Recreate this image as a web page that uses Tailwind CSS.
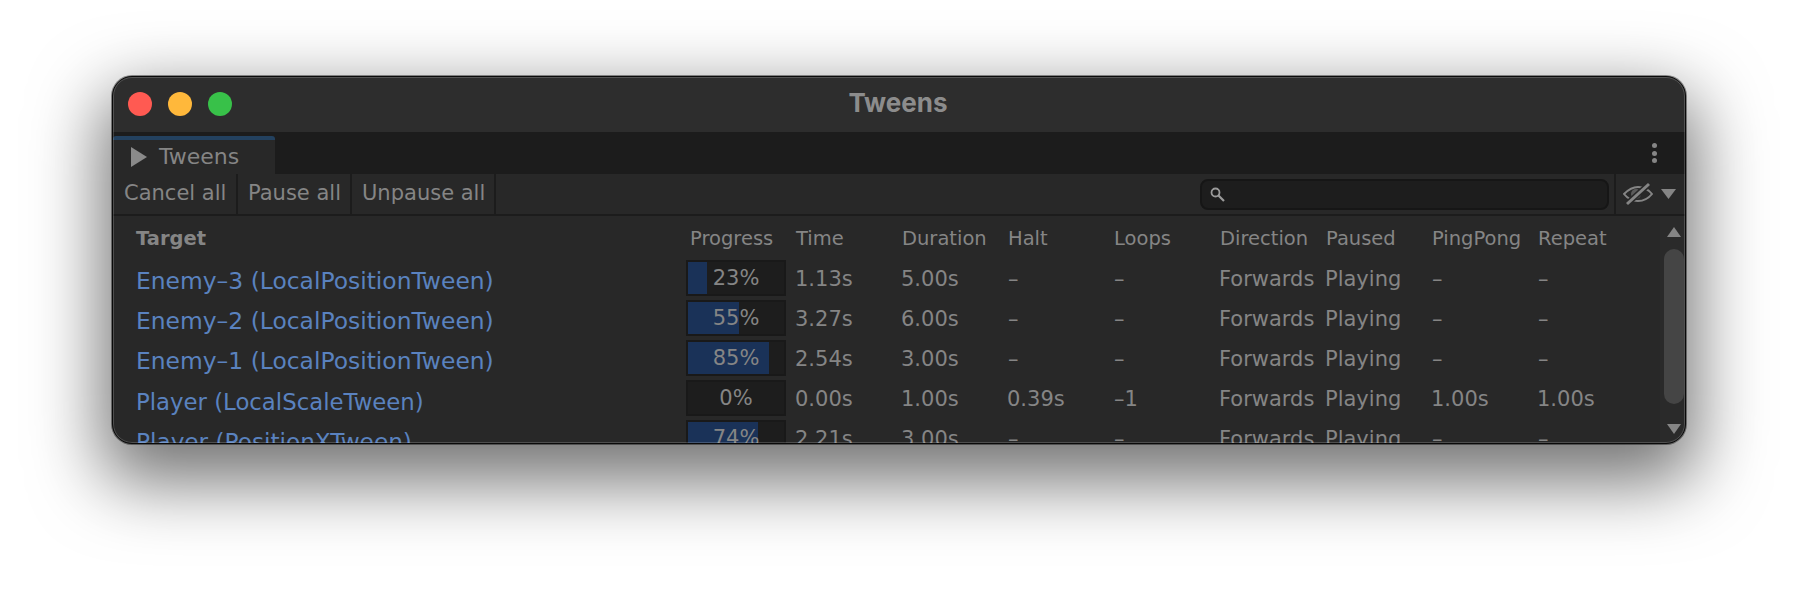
<!DOCTYPE html>
<html><head><meta charset="utf-8"><script src="https://cdn.jsdelivr.net/npm/@tailwindcss/browser@4"></script></head>
<body class="bg-white w-[1798px] h-[592px] overflow-hidden font-['DejaVu_Sans',sans-serif]">
<div class="pt-[76px] pl-[112px]">
<div class="relative w-[1574px] h-[368px] rounded-[20px] overflow-hidden flex flex-col bg-[#282828] border border-[#0a0a0a] ring-1 ring-[#00000066] shadow-[0_28px_70px_10px_rgba(0,0,0,0.55)] text-[#858585] text-[21px] leading-none">
  <div class="h-[55px] shrink-0 bg-[#2d2d2d] relative flex items-center pl-[15px] pb-[2px] gap-[16px]">
    <span class="w-6 h-6 rounded-full bg-[#ff5a52]"></span>
    <span class="w-6 h-6 rounded-full bg-[#ffb83b]"></span>
    <span class="w-6 h-6 rounded-full bg-[#38c149]"></span>
    <span class="absolute inset-0 pb-[4px] pr-[2px] flex items-center justify-center font-['Inter',sans-serif] font-bold text-[26px] text-[#8c8c8c]">Tweens</span>
  </div>
  <div class="h-[42px] shrink-0 bg-[#1c1c1c] flex justify-between">
    <div class="w-[162px] mt-[4px] border-t-[4px] border-[#23415f] bg-[#282828] rounded-t-[3px] flex items-center pl-[18px] gap-[12px]">
      <svg width="16" height="20" viewBox="0 0 16 20"><path d="M0 0L16 10L0 20Z" fill="#8a8a8a"/></svg>
      <span class="text-[22px]">Tweens</span>
    </div>
    <div class="flex flex-col gap-[2.5px] justify-center pr-[28px]">
      <span class="w-[5px] h-[5px] rounded-full bg-[#858585]"></span>
      <span class="w-[5px] h-[5px] rounded-full bg-[#858585]"></span>
      <span class="w-[5px] h-[5px] rounded-full bg-[#858585]"></span>
    </div>
  </div>
  <div class="h-[42px] shrink-0 bg-[#282828] border-b-2 border-[#1c1c1c] flex items-stretch text-[21px]">
    <div class="w-[125px] border-r-2 border-[#1c1c1c] flex items-center pl-[11px] pb-[2px]">Cancel all</div>
    <div class="w-[114px] border-r-2 border-[#1c1c1c] flex items-center pl-[10px] pb-[2px]">Pause all</div>
    <div class="w-[144px] border-r-2 border-[#1c1c1c] flex items-center pl-[10px] pb-[2px]">Unpause all</div>
    <div class="flex-1 flex items-center justify-end pr-[5px]">
      <div class="w-[409px] h-[31px] rounded-[8px] bg-[#1d1d1d] border-2 border-[#161616] flex items-center pl-[8px]">
        <svg width="15" height="15" viewBox="0 0 15 15" fill="none" stroke="#9a9a9a" stroke-width="1.8"><circle cx="5.5" cy="5.5" r="4"/><path d="M8.5 8.5L14 14" stroke-width="2.2"/></svg>
      </div>
    </div>
    <div class="w-[71px] border-l-2 border-[#1c1c1c] flex items-center pl-[7px] gap-[8px]">
      <svg width="30" height="24" viewBox="0 0 30 24" fill="none"><path d="M1 12C6 7 11 5 15 5C20 5 25 7 29 12C25 17 20 19 15 19C10 19 5 17 1 12Z" stroke="#858585" stroke-width="2"/><circle cx="13" cy="12" r="5" fill="#858585" fill-opacity="0.55"/><path d="M4 22L26 2" stroke="#282828" stroke-width="6"/><path d="M4 22L26 2" stroke="#858585" stroke-width="3"/></svg>
      <svg width="15" height="10" viewBox="0 0 15 10"><path d="M0 0H15L7.5 10Z" fill="#858585"/></svg>
    </div>
  </div>
  <div class="flex-1 min-h-0 flex">
    <div class="flex-1 min-w-0 overflow-hidden">
      <div class="grid grid-cols-[554px_106px_106px_106px_106px_106px_106px_106px_106px_106px] pl-[23px] items-center text-[19.5px]">
        <div class="h-[42px] flex items-center pt-[4px] font-bold">Target</div><div class="h-[42px] flex items-center pt-[4px]">Progress</div><div class="h-[42px] flex items-center pt-[4px]">Time</div><div class="h-[42px] flex items-center pt-[4px]">Duration</div><div class="h-[42px] flex items-center pt-[4px]">Halt</div><div class="h-[42px] flex items-center pt-[4px]">Loops</div><div class="h-[42px] flex items-center pt-[4px]">Direction</div><div class="h-[42px] flex items-center pt-[4px]">Paused</div><div class="h-[42px] flex items-center pt-[4px]">PingPong</div><div class="h-[42px] flex items-center pt-[4px]">Repeat</div>
      </div>
      <div class="grid grid-cols-[554px_106px_106px_106px_106px_106px_106px_106px_106px_106px] auto-rows-[40px] pl-[23px] items-center text-[21px]">
        <div class="text-[#5a82bf] text-[23.4px] pt-[8px]">Enemy–3 (LocalPositionTween)</div>
        <div class="-ml-[4px] w-[100px] h-[36px] bg-[#1d1d1d] border-2 border-[#191919] relative"><div class="h-full w-[19px] bg-[#1a3258]"></div><span class="absolute inset-0 flex items-center justify-center">23%</span></div>
        <div class="-ml-[1px] pt-[2px]">1.13s</div><div class="-ml-[1px] pt-[2px]">5.00s</div><div class="pt-[2px]">–</div><div class="pt-[2px]">–</div><div class="-ml-[1px] pt-[2px]">Forwards</div><div class="-ml-[1px] pt-[2px]">Playing</div><div class="pt-[2px]">–</div><div class="pt-[2px]">–</div>
        <div class="text-[#5a82bf] text-[23.4px] pt-[8px]">Enemy–2 (LocalPositionTween)</div>
        <div class="-ml-[4px] w-[100px] h-[36px] bg-[#1d1d1d] border-2 border-[#191919] relative"><div class="h-full w-[51px] bg-[#1a3258]"></div><span class="absolute inset-0 flex items-center justify-center">55%</span></div>
        <div class="-ml-[1px] pt-[2px]">3.27s</div><div class="-ml-[1px] pt-[2px]">6.00s</div><div class="pt-[2px]">–</div><div class="pt-[2px]">–</div><div class="-ml-[1px] pt-[2px]">Forwards</div><div class="-ml-[1px] pt-[2px]">Playing</div><div class="pt-[2px]">–</div><div class="pt-[2px]">–</div>
        <div class="text-[#5a82bf] text-[23.4px] pt-[8px]">Enemy–1 (LocalPositionTween)</div>
        <div class="-ml-[4px] w-[100px] h-[36px] bg-[#1d1d1d] border-2 border-[#191919] relative"><div class="h-full w-[81px] bg-[#1a3258]"></div><span class="absolute inset-0 flex items-center justify-center">85%</span></div>
        <div class="-ml-[1px] pt-[2px]">2.54s</div><div class="-ml-[1px] pt-[2px]">3.00s</div><div class="pt-[2px]">–</div><div class="pt-[2px]">–</div><div class="-ml-[1px] pt-[2px]">Forwards</div><div class="-ml-[1px] pt-[2px]">Playing</div><div class="pt-[2px]">–</div><div class="pt-[2px]">–</div>
        <div class="text-[#5a82bf] text-[22.8px] pt-[8px]">Player (LocalScaleTween)</div>
        <div class="-ml-[4px] w-[100px] h-[36px] bg-[#1d1d1d] border-2 border-[#191919] relative"><span class="absolute inset-0 flex items-center justify-center">0%</span></div>
        <div class="-ml-[1px] pt-[2px]">0.00s</div><div class="-ml-[1px] pt-[2px]">1.00s</div><div class="-ml-[1px] pt-[2px]">0.39s</div><div class="pt-[2px]">–1</div><div class="-ml-[1px] pt-[2px]">Forwards</div><div class="-ml-[1px] pt-[2px]">Playing</div><div class="-ml-[1px] pt-[2px]">1.00s</div><div class="-ml-[1px] pt-[2px]">1.00s</div>
        <div class="text-[#5a82bf] text-[23.2px] pt-[8px]">Player (PositionXTween)</div>
        <div class="-ml-[4px] w-[100px] h-[36px] bg-[#1d1d1d] border-2 border-[#191919] relative"><div class="h-full w-[70px] bg-[#1a3258]"></div><span class="absolute inset-0 flex items-center justify-center">74%</span></div>
        <div class="-ml-[1px] pt-[2px]">2.21s</div><div class="-ml-[1px] pt-[2px]">3.00s</div><div class="pt-[2px]">–</div><div class="pt-[2px]">–</div><div class="-ml-[1px] pt-[2px]">Forwards</div><div class="-ml-[1px] pt-[2px]">Playing</div><div class="pt-[2px]">–</div><div class="pt-[2px]">–</div>
      </div>
    </div>
    <div class="w-[25px] shrink-0 bg-[#2a2a2a] flex flex-col items-center pl-[2px]">
      <svg class="mt-[11px]" width="14" height="10" viewBox="0 0 14 10"><path d="M7 0L14 10H0Z" fill="#858585"/></svg>
      <div class="w-[20px] h-[155px] mt-[12px] rounded-[10px] bg-[#454545]"></div>
      <svg class="mt-[20px]" width="14" height="10" viewBox="0 0 14 10"><path d="M0 0H14L7 10Z" fill="#858585"/></svg>
    </div>
  </div>
  <div class="absolute inset-0 rounded-[19px] border border-[#ffffff2e] pointer-events-none"></div>
</div>
</div>
</body></html>
